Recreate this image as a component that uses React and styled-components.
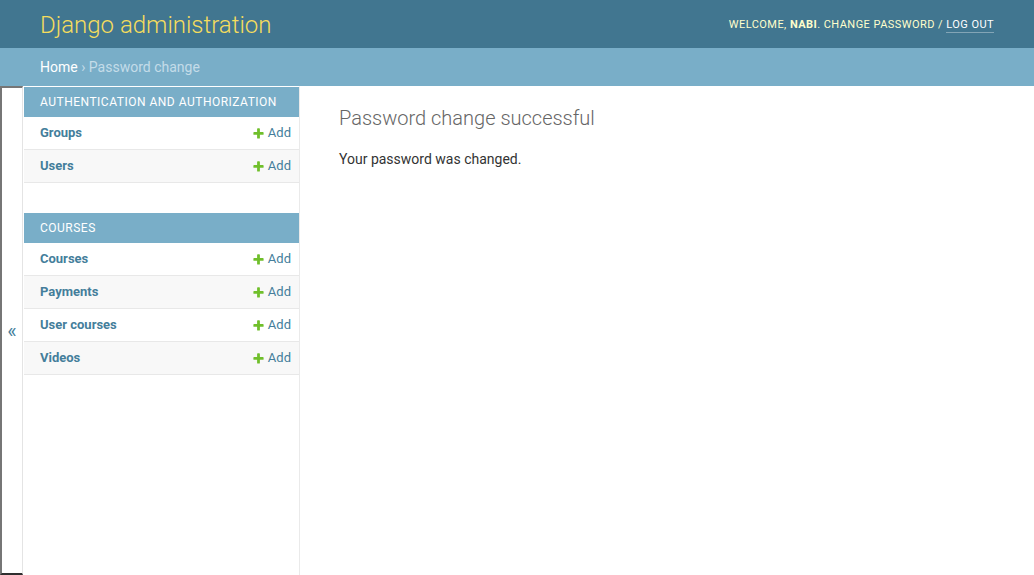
import React from "react";
import styled, { createGlobalStyle } from "styled-components";

const GlobalStyle = createGlobalStyle`
  html, body { margin: 0; padding: 0; height: 100%; }
  body {
    font-family: Roboto, "Lucida Grande", "DejaVu Sans", sans-serif;
    font-size: 14px;
    color: #333;
    background: #fff;
  }
  * { box-sizing: border-box; }
`;

const Page = styled.div`
  display: flex;
  flex-direction: column;
  min-height: 100vh;
`;

const Header = styled.header`
  height: 48px;
  padding: 10px 40px;
  background: #417690;
  display: flex;
  align-items: center;
  justify-content: space-between;
`;

const Branding = styled.h1`
  margin: 0;
  padding-top: 1px;
  font-size: 24px;
  line-height: 28px;
  font-weight: 300;
  color: #f5dd5d;
`;

const UserTools = styled.div`
  font-size: 11px;
  letter-spacing: 0.45px;
  text-transform: uppercase;
  color: #ffc;
  line-height: 14px;
  padding-top: 1px;
`;

const Strong = styled.strong`
  font-weight: 700;
`;

const ToolLink = styled.a`
  color: ${(p) => (p.$underlined ? "#fff" : "#ffc")};
  text-decoration: none;
  border-bottom: 1px solid ${(p) => (p.$underlined ? "rgba(255,255,255,0.35)" : "transparent")};
  padding-bottom: 1px;
`;

const Breadcrumbs = styled.div`
  height: 38px;
  padding: 10px 40px;
  background: #79aec8;
  color: #c4dce8;
  font-size: 14px;
  line-height: 18px;
`;

const Crumb = styled.a`
  color: #fff;
  text-decoration: none;
`;

const Main = styled.div`
  flex: 1;
  display: flex;
`;

const Toggle = styled.button`
  flex: 0 0 23px;
  width: 23px;
  padding: 0;
  margin: 0;
  background: #fff;
  border-left: 2px solid #767676;
  border-top: 2px solid #767676;
  border-right: 1px solid #e4e4e4;
  border-bottom: 2px solid #2f2f2f;
  color: #447e9b;
  font-family: Roboto, sans-serif;
  font-size: 20px;
  display: flex;
  align-items: center;
  justify-content: center;
  cursor: pointer;
`;

const Sidebar = styled.nav`
  flex: 0 0 277px;
  border-top: 1px solid transparent;
  border-right: 1px solid #eaeaea;
  padding-left: 1px;
`;

const Module = styled.section`
  margin-bottom: 30px;
`;

const Caption = styled.div`
  background: #79aec8;
  color: #fff;
  font-size: 12px;
  letter-spacing: 0.5px;
  text-transform: uppercase;
  line-height: 14px;
  padding: 8px 8px 8px 16px;
`;

const Row = styled.div`
  display: flex;
  align-items: center;
  justify-content: space-between;
  padding: 8px 8px 8px 16px;
  line-height: 16px;
  font-size: 13px;
  border-bottom: 1px solid #e8e8e8;
  background: ${(p) => (p.$even ? "#f8f8f8" : "#fff")};
`;

const ModelLink = styled.a`
  color: #447e9b;
  font-weight: 700;
  text-decoration: none;
`;

const AddLink = styled.a`
  display: inline-flex;
  align-items: center;
  gap: 3px;
  color: #447e9b;
  text-decoration: none;
`;

const Content = styled.main`
  flex: 1;
  padding: 20px 40px 20px 39px;
`;

const Title = styled.h1`
  margin: 0 0 20px;
  font-size: 20px;
  line-height: 24px;
  font-weight: 300;
  color: #666;
`;

const Text = styled.p`
  margin: 0;
  font-size: 14px;
  line-height: 18px;
  color: #333;
`;

const PlusIcon = () => (
  <svg width="13" height="13" viewBox="0 0 1792 1792" aria-hidden="true">
    <path
      fill="#70bf2b"
      d="M1600 796v192q0 40-28 68t-68 28h-416v416q0 40-28 68t-68 28h-192q-40 0-68-28t-28-68v-416h-416q-40 0-68-28t-28-68v-192q0-40 28-68t68-28h416v-416q0-40 28-68t68-28h192q40 0 68 28t28 68v416h416q40 0 68 28t28 68z"
    />
  </svg>
);

const modules = [
  { name: "Authentication and Authorization", models: ["Groups", "Users"] },
  { name: "Courses", models: ["Courses", "Payments", "User courses", "Videos"] },
];

export default function App() {
  return (
    <Page>
      <GlobalStyle />
      <Header>
        <Branding>Django administration</Branding>
        <UserTools>
          Welcome, <Strong>nabi</Strong>. <ToolLink href="#">Change password</ToolLink> /{" "}
          <ToolLink href="#" $underlined>Log out</ToolLink>
        </UserTools>
      </Header>
      <Breadcrumbs>
        <Crumb href="#">Home</Crumb> › Password change
      </Breadcrumbs>
      <Main>
        <Toggle aria-label="Toggle navigation">«</Toggle>
        <Sidebar>
          {modules.map((m) => (
            <Module key={m.name}>
              <Caption>{m.name}</Caption>
              {m.models.map((model, i) => (
                <Row key={model} $even={i % 2 === 1}>
                  <ModelLink href="#">{model}</ModelLink>
                  <AddLink href="#">
                    <PlusIcon />
                    Add
                  </AddLink>
                </Row>
              ))}
            </Module>
          ))}
        </Sidebar>
        <Content>
          <Title>Password change successful</Title>
          <Text>Your password was changed.</Text>
        </Content>
      </Main>
    </Page>
  );
}
